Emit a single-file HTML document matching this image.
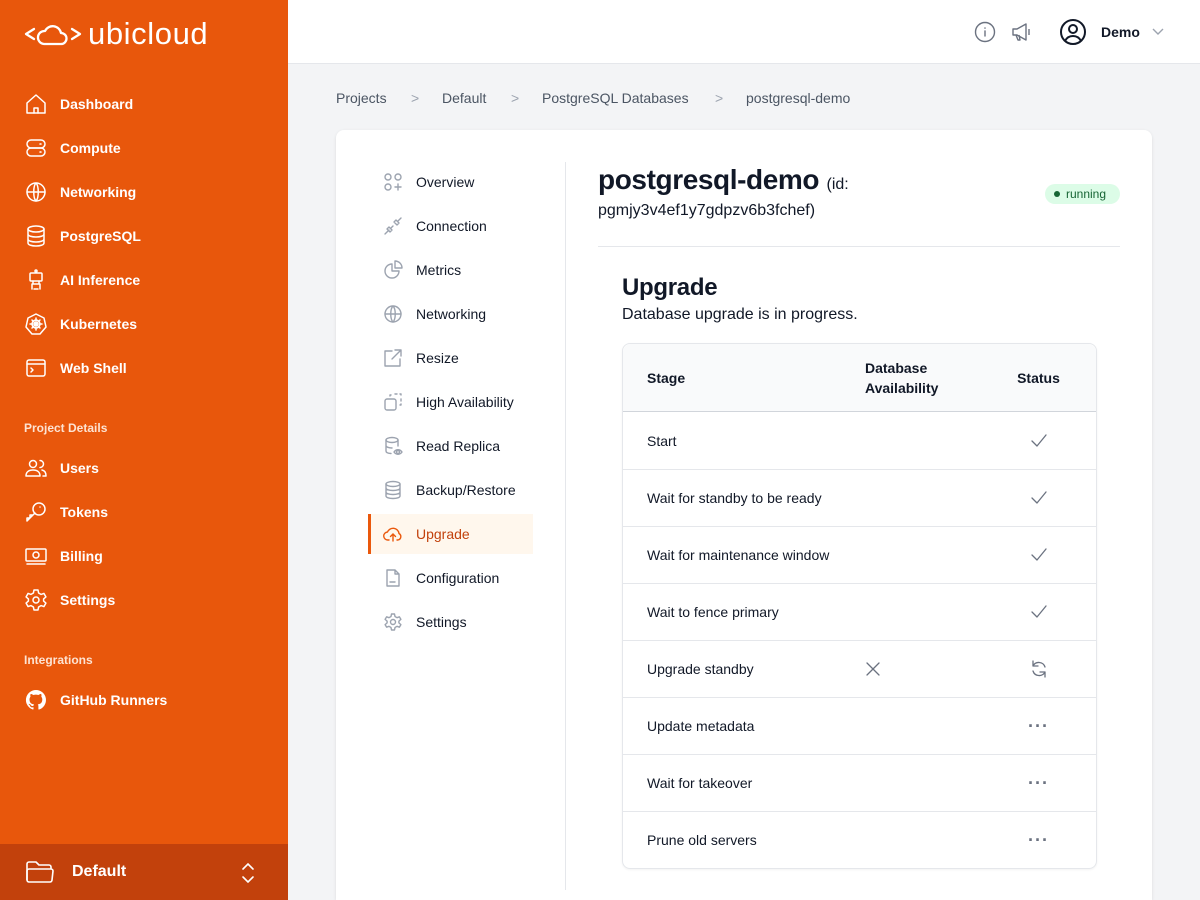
<!DOCTYPE html>
<html><head><meta charset="utf-8"><style>
*{box-sizing:border-box;margin:0;padding:0}
html,body{width:1200px;height:900px;overflow:hidden}
body{font-family:"Liberation Sans",sans-serif;background:#f3f4f6;position:relative;color:#111827}
.sb{position:absolute;left:0;top:0;width:288px;height:900px;background:#e8570c;color:#fff}
.sb .it{position:absolute;left:24px;font-size:14px;font-weight:bold;display:flex;align-items:center;height:24px}
.sb .it svg{width:24px;height:24px;margin-right:12px;fill:none;stroke:#fff;stroke-width:1.5;stroke-linecap:round;stroke-linejoin:round}
.sb .sec{position:absolute;left:24px;font-size:12px;font-weight:bold;color:#fde3d3}
.bot{position:absolute;left:0;top:844px;width:288px;height:56px;background:#c2410c}
.hdr{position:absolute;left:288px;top:0;right:0;height:64px;background:#fff;border-bottom:1px solid #e5e7eb}
.bc{position:absolute;top:90px;font-size:14px;color:#4b5563}
.card{position:absolute;left:336px;top:130px;width:816px;height:770px;background:#fff;border-radius:8px 8px 0 0;box-shadow:0 1px 3px rgba(0,0,0,.1)}
.nv{position:absolute;left:383px;font-size:14px;color:#111827;display:flex;align-items:center;height:24px}
.nv svg{width:20px;height:20px;margin-right:13px;fill:none;stroke:#9ca3af;stroke-width:1.4;stroke-linecap:round;stroke-linejoin:round}
table{position:absolute;left:622px;top:343px;width:475px;border-collapse:separate;border-spacing:0;border:1px solid #e5e7eb;border-radius:8px;font-size:14px;box-shadow:0 1px 2px rgba(0,0,0,.05)}
th{background:#f9fafb;height:68px;text-align:left;font-weight:bold;border-bottom:1px solid #d1d5db;padding-left:24px}
td{height:57px;border-top:1px solid #e5e7eb;padding-left:24px}
tr:nth-child(2) td{border-top:none}
th:first-child{border-top-left-radius:8px}th:last-child{border-top-right-radius:8px}
.st{text-align:center;padding-left:0;color:#6b7280}
td svg{width:20px;height:20px;fill:none;stroke:#6b7280;stroke-width:1.3;stroke-linecap:round;stroke-linejoin:round;vertical-align:middle}
.dots{font-size:18px;font-weight:bold;letter-spacing:1px;color:#6b7280}
</style></head><body>
<div class="sb">
 <div style="position:absolute;left:24px;top:16px;display:flex;align-items:center">
  <svg width="58" height="32" viewBox="0 0 58 32" fill="none" stroke="#fff" stroke-width="2.3" stroke-linecap="round" stroke-linejoin="round"><path d="M10 11 2 16l8 5"/><path d="M48 11l8 5-8 5"/><path d="M20 26h17a5.5 5.5 0 0 0 0-11 8.5 8.5 0 0 0-16-2 6.5 6.5 0 0 0-1 13z"/></svg>
  <span style="font-size:31px;margin-left:6px;letter-spacing:.6px">ubicloud</span>
 </div>
 <div class="it" style="top:92px"><svg viewBox="0 0 24 24"><path d="M3 11l9-8 9 8v10H3z"/><path d="M10 21v-5h4v5"/></svg>Dashboard</div>
 <div class="it" style="top:136px"><svg viewBox="0 0 24 24"><rect x="3" y="4" width="18" height="8" rx="4"/><rect x="3" y="12" width="18" height="8" rx="4"/><path d="M16 8h1M16 16h1"/></svg>Compute</div>
 <div class="it" style="top:180px"><svg viewBox="0 0 24 24"><circle cx="12" cy="12" r="9"/><path d="M3 12h18M12 3c3 3 3 15 0 18M12 3c-3 3-3 15 0 18"/></svg>Networking</div>
 <div class="it" style="top:224px"><svg viewBox="0 0 24 24"><ellipse cx="12" cy="5" rx="8" ry="3"/><path d="M4 5v14c0 2 4 3 8 3s8-1 8-3V5M4 10c0 2 4 3 8 3s8-1 8-3M4 15c0 2 4 3 8 3s8-1 8-3"/></svg>PostgreSQL</div>
 <div class="it" style="top:268px"><svg viewBox="0 0 24 24"><circle cx="12" cy="3" r="1"/><rect x="6" y="5" width="12" height="8" rx="1"/><path d="M9 13v3h6v-3M8 16h8v5M8 21v-5M10 21h4"/></svg>AI Inference</div>
 <div class="it" style="top:312px"><svg viewBox="0 0 24 24"><path d="M12 2l8 4 2 9-6 7H8l-6-7 2-9z"/><circle cx="12" cy="12" r="4"/><path d="M12 6v12M6 12h12M8 8l8 8M16 8l-8 8"/></svg>Kubernetes</div>
 <div class="it" style="top:356px"><svg viewBox="0 0 24 24"><rect x="3" y="4" width="18" height="16" rx="2"/><path d="M3 8h18M7 12l2 2-2 2"/></svg>Web Shell</div>
 <div class="sec" style="top:421px">Project Details</div>
 <div class="it" style="top:456px"><svg viewBox="0 0 24 24"><circle cx="9" cy="8" r="3.5"/><path d="M2 20c0-4 3-6 7-6s7 2 7 6zM16 4.5a3.5 3.5 0 0 1 0 7M18 14c2.5.5 4 2.5 4 6h-3"/></svg>Users</div>
 <div class="it" style="top:500px"><svg viewBox="0 0 24 24"><circle cx="15" cy="9" r="6"/><path d="M11 13l-8 8v-3h3v-3h3l2-2M16 7h.01"/></svg>Tokens</div>
 <div class="it" style="top:544px"><svg viewBox="0 0 24 24"><rect x="2" y="5" width="20" height="12" rx="1"/><circle cx="12" cy="11" r="3"/><path d="M3 20h18"/></svg>Billing</div>
 <div class="it" style="top:588px"><svg viewBox="0 0 24 24"><circle cx="12" cy="12" r="3"/><path d="M10 2h4l.6 3 2.4 1.4 2.9-1 2 3.5-2.3 2v2.2l2.3 2-2 3.5-2.9-1L14.6 19 14 22h-4l-.6-3L7 17.6l-2.9 1-2-3.5 2.3-2v-2.2l-2.3-2 2-3.5 2.9 1L9.4 5z"/></svg>Settings</div>
 <div class="sec" style="top:653px">Integrations</div>
 <div class="it" style="top:688px"><svg viewBox="0 0 24 24" style="fill:#fff;stroke:none"><path d="M12 2a10 10 0 0 0-3.2 19.5c.5.1.7-.2.7-.5v-1.7c-2.8.6-3.4-1.3-3.4-1.3-.5-1.2-1.1-1.5-1.1-1.5-.9-.6.1-.6.1-.6 1 .1 1.5 1 1.5 1 .9 1.5 2.4 1.1 2.9.8.1-.7.4-1.1.6-1.3-2.2-.3-4.600-1.1-4.600-5 0-1.1.4-2 1-2.7-.1-.3-.4-1.3.1-2.700 0 0 .8-.3 2.8 1a9.6 9.6 0 0 1 5 0c1.9-1.3 2.8-1 2.8-1 .5 1.4.2 2.4.1 2.7.6.7 1 1.6 1 2.7 0 3.9-2.3 4.7-4.6 5 .4.3.7.9.7 1.9V21c0 .3.2.6.7.5A10 10 0 0 0 12 2z"/></svg>GitHub Runners</div>
 <div class="bot">
  <svg style="position:absolute;left:25px;top:16px" width="30" height="24" viewBox="0 0 30 24" fill="none" stroke="#fff" stroke-width="1.6" stroke-linejoin="round"><path d="M2 20V4a2 2 0 0 1 2-2h7l3 3h10a2 2 0 0 1 2 2v2"/><path d="M2 11a2 2 0 0 1 2-2h22a2 2 0 0 1 2 2l-1 9a2 2 0 0 1-2 2H4a2 2 0 0 1-2-2z"/></svg>
  <span style="position:absolute;left:72px;top:19px;font-size:16px;font-weight:bold">Default</span>
  <svg style="position:absolute;left:240px;top:18px" width="16" height="22" viewBox="0 0 16 22" fill="none" stroke="#fff" stroke-width="1.6" stroke-linecap="round"><path d="M3 7l5-5 5 5M3 15l5 5 5-5"/></svg>
 </div>
</div>
<div class="hdr">
 <svg style="position:absolute;left:686px;top:21px" width="22" height="22" viewBox="0 0 22 22" fill="none" stroke="#6b7280" stroke-width="1.4" stroke-linecap="round"><circle cx="11" cy="11" r="9.5"/><path d="M11 10v5M11 7v.2"/></svg>
 <svg style="position:absolute;left:722px;top:21px" width="22" height="22" viewBox="0 0 22 22" fill="none" stroke="#6b7280" stroke-width="1.4" stroke-linejoin="round"><path d="M3 8h4l9-5v16l-9-5H3zM6 14l2 5h2l-1-5M19 8v6"/></svg>
 <svg style="position:absolute;left:771px;top:18px" width="28" height="28" viewBox="0 0 28 28" fill="none" stroke="#111827" stroke-width="2"><circle cx="14" cy="14" r="12"/><circle cx="14" cy="11" r="4"/><path d="M6 23c2-4 5-5 8-5s6 1 8 5"/></svg>
 <span style="position:absolute;left:813px;top:24px;font-size:14px;font-weight:bold">Demo</span>
 <svg style="position:absolute;left:863px;top:26px" width="14" height="12" viewBox="0 0 14 12" fill="none" stroke="#9ca3af" stroke-width="1.4"><path d="M2 3l5 5 5-5"/></svg>
</div>
<span class="bc" style="left:336px">Projects</span><span class="bc" style="left:411px;color:#9ca3af">&gt;</span>
<span class="bc" style="left:442px">Default</span><span class="bc" style="left:511px;color:#9ca3af">&gt;</span>
<span class="bc" style="left:542px">PostgreSQL Databases</span><span class="bc" style="left:715px;color:#9ca3af">&gt;</span>
<span class="bc" style="left:746px">postgresql-demo</span>
<div class="card"></div>
<div style="position:absolute;left:565px;top:162px;width:1px;height:728px;background:#e5e7eb"></div>
<div style="position:absolute;left:368px;top:514px;width:165px;height:40px;background:#fff7ed;border-left:3px solid #ea580c"></div>
<div class="nv" style="top:170px"><svg viewBox="0 0 20 20"><circle cx="5" cy="5" r="3"/><circle cx="15" cy="5" r="3"/><circle cx="5" cy="15" r="3"/><path d="M15 12v6M12 15h6"/></svg>Overview</div>
<div class="nv" style="top:214px"><svg viewBox="0 0 20 20"><path d="M2 18l4-4M18 2l-3 3M6 11l3 3-2 2-3-3zM11 6l3 3 2-2-3-3zM8 12l2-2"/></svg>Connection</div>
<div class="nv" style="top:258px"><svg viewBox="0 0 20 20"><path d="M9 4a7 7 0 1 0 7 7H9z"/><path d="M12 1a7 7 0 0 1 7 7h-7z"/></svg>Metrics</div>
<div class="nv" style="top:302px"><svg viewBox="0 0 20 20"><circle cx="10" cy="10" r="8"/><path d="M2 10h16M10 2c3 3 3 13 0 16M10 2c-3 3-3 13 0 16"/></svg>Networking</div>
<div class="nv" style="top:346px"><svg viewBox="0 0 20 20"><path d="M9 3H2v15h15v-7M12 2h6v6M18 2l-9 9"/></svg>Resize</div>
<div class="nv" style="top:390px"><svg viewBox="0 0 20 20"><rect x="2" y="7" width="11" height="11" rx="2"/><path d="M7 4V3h2M12 2h2M17 2h1v2M18 7v2M18 12v1h-2" stroke-dasharray="2 2"/></svg>High Availability</div>
<div class="nv" style="top:434px"><svg viewBox="0 0 20 20"><ellipse cx="9" cy="4" rx="6" ry="2.5"/><path d="M3 4v11c0 1.5 2 2.3 5 2.5M15 4v6M3 9.5c0 1.5 3 2.5 6 2.5"/><circle cx="15" cy="16" r="1.5"/><path d="M11 16c2-3 6-3 8 0-2 3-6 3-8 0z"/></svg>Read Replica</div>
<div class="nv" style="top:478px"><svg viewBox="0 0 20 20"><ellipse cx="10" cy="4" rx="7" ry="2.5"/><path d="M3 4v12c0 1.5 3 2.5 7 2.5s7-1 7-2.5V4M3 8c0 1.5 3 2.5 7 2.5S17 9.5 17 8M3 12c0 1.5 3 2.5 7 2.5s7-1 7-2.5"/></svg>Backup/Restore</div>
<div class="nv" style="top:522px;color:#c2410c"><svg viewBox="0 0 20 20" style="stroke:#ea580c"><path d="M6 16H5a4 4 0 0 1-.5-8 6 6 0 0 1 11.5 1.5A3.5 3.5 0 0 1 15 16h-1"/><path d="M10 17v-7M7.5 12.5 10 10l2.5 2.5"/></svg>Upgrade</div>
<div class="nv" style="top:566px"><svg viewBox="0 0 20 20"><path d="M4 2h8l4 4v12H4zM12 2v4h4M7 14h5"/></svg>Configuration</div>
<div class="nv" style="top:610px"><svg viewBox="0 0 20 20"><circle cx="10" cy="10" r="2.5"/><path d="M8.5 2h3l.5 2.5 2 1.2 2.4-.9 1.5 2.6-2 1.7v1.8l2 1.7-1.5 2.6-2.4-.9-2 1.2-.5 2.5h-3L8 15.5l-2-1.2-2.4.9-1.5-2.6 2-1.7V9.1l-2-1.7 1.5-2.6 2.4.9 2-1.2z"/></svg>Settings</div>
<div style="position:absolute;left:598px;top:164px;font-size:28px;font-weight:bold;letter-spacing:-.4px">postgresql-demo <span style="font-size:16px;font-weight:normal;letter-spacing:0">(id:</span></div>
<div style="position:absolute;left:598px;top:202px;font-size:16px">pgmjy3v4ef1y7gdpzv6b3fchef)</div>
<div style="position:absolute;left:1045px;top:184px;width:75px;height:20px;border-radius:10px;background:#dcfce7;color:#166534;font-size:12px;line-height:20px;padding-left:21px">running<span style="position:absolute;left:9px;top:7px;width:6px;height:6px;border-radius:3px;background:#166534"></span></div>
<div style="position:absolute;left:598px;top:246px;width:522px;height:1px;background:#e5e7eb"></div>
<div style="position:absolute;left:622px;top:274px;font-size:24px;font-weight:bold;letter-spacing:-.3px">Upgrade</div>
<div style="position:absolute;left:622px;top:306px;font-size:16px">Database upgrade is in progress.</div>
<table>
<tr><th style="width:218px">Stage</th><th style="width:140px;line-height:20px">Database Availability</th><th style="text-align:center;padding-left:0">Status</th></tr>
<tr><td>Start</td><td></td><td class="st"><svg viewBox="0 0 20 20"><path d="M3 10l5 5L17 4"/></svg></td></tr>
<tr><td>Wait for standby to be ready</td><td></td><td class="st"><svg viewBox="0 0 20 20"><path d="M3 10l5 5L17 4"/></svg></td></tr>
<tr><td>Wait for maintenance window</td><td></td><td class="st"><svg viewBox="0 0 20 20"><path d="M3 10l5 5L17 4"/></svg></td></tr>
<tr><td>Wait to fence primary</td><td></td><td class="st"><svg viewBox="0 0 20 20"><path d="M3 10l5 5L17 4"/></svg></td></tr>
<tr><td>Upgrade standby</td><td style="padding-left:22px"><svg viewBox="0 0 20 20"><path d="M4 4l12 12M16 4 4 16"/></svg></td><td class="st"><svg viewBox="0 0 20 20"><path d="M16 8a6.5 6.5 0 0 0-12-1M4 2v5h5M4 12a6.5 6.5 0 0 0 12 1M16 18v-5h-5"/></svg></td></tr>
<tr><td>Update metadata</td><td></td><td class="st dots">···</td></tr>
<tr><td>Wait for takeover</td><td></td><td class="st dots">···</td></tr>
<tr><td>Prune old servers</td><td></td><td class="st dots">···</td></tr>
</table>
</body></html>
